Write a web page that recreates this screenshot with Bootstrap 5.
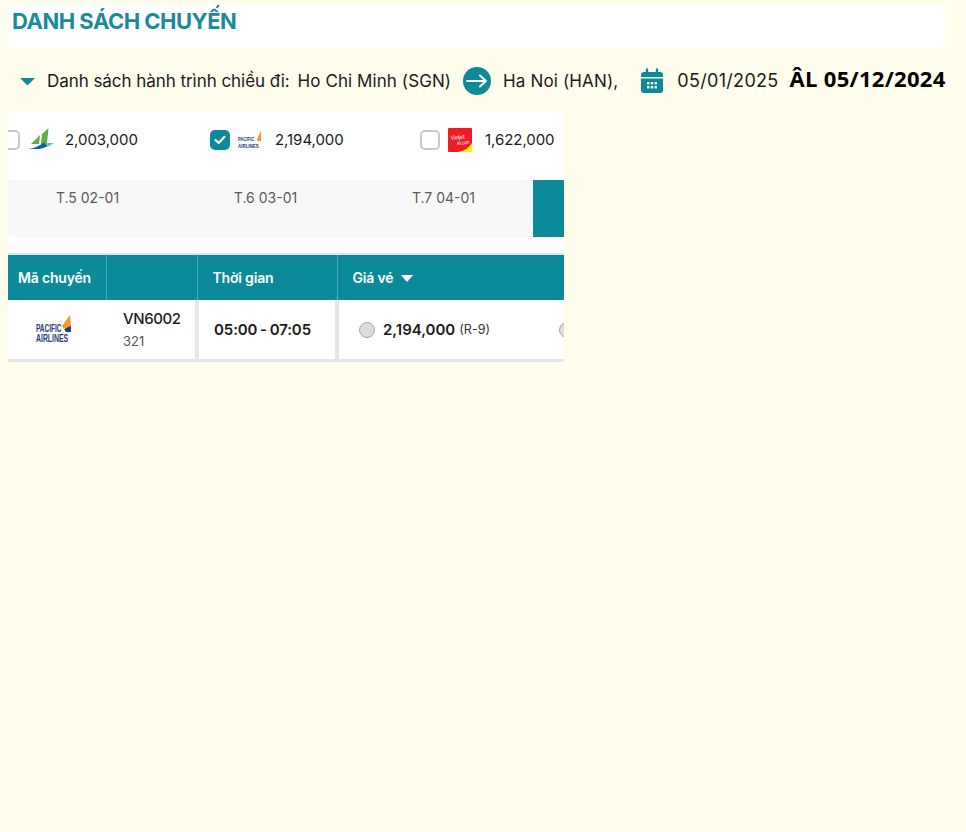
<!DOCTYPE html>
<html lang="vi">

<head>
    <meta charset="UTF-8">
    <title>Danh sách chuyến</title>
    <link href="https://cdn.jsdelivr.net/npm/bootstrap@5.3.3/dist/css/bootstrap.min.css" rel="stylesheet">
    <style>
        body {
            background-color: #FFFDEB;
            font-family: Inter, "Noto Sans", sans-serif;
            color: #1a1a1a;
            padding: 5px 21px 0 8px;
            min-height: 832px;
        }

        .title-bar {
            height: 42px;
            padding: 2px 4px;
            font-size: 22px;
            line-height: 28px;
            font-weight: 700;
            letter-spacing: -0.5px;
            color: #1B8A9A;
        }

        .route-bar {
            height: 66px;
            padding-left: 12px;
            padding-top: 2px;
            font-size: 17px;
            line-height: 24px;
            white-space: nowrap;
        }

        .route-label {
            margin-left: 12px;
            letter-spacing: -0.05px;
        }

        .route-from {
            margin-left: 8px;
            letter-spacing: 0.08px;
        }

        .route-arrow {
            margin-left: 12px;
            flex: none;
        }

        .route-to {
            margin-left: 12px;
            letter-spacing: 0.15px;
        }

        .route-cal {
            margin-left: 22px;
            flex: none;
        }

        .route-date {
            margin-left: 13px;
            font-size: 18px;
            letter-spacing: 0.3px;
        }

        .lunar-date {
            font-family: "Open Sans", sans-serif;
            font-weight: 700;
            font-size: 22px;
            letter-spacing: 0.3px;
            color: #000;
            margin-left: 11px;
            margin-top: -7px;
        }

        .result-box {
            width: 556px;
            height: 250px;
            overflow: hidden;
            background: #fff;
        }

        .airline-row {
            height: 67px;
            padding-bottom: 13px;
            margin-left: -8px;
        }

        .airline-item {
            width: 210px;
            flex: none;
            font-size: 15px;
            letter-spacing: -0.05px;
        }

        .check-box {
            width: 20px;
            height: 20px;
            flex: none;
            border: 2px solid #c9c9c9;
            border-radius: 5px;
            background: #fff;
        }

        .check-box.is-on {
            background: #0D8A99;
            border-color: #0D8A99;
        }

        .air-logo {
            flex: none;
            margin-left: 8px;
            margin-right: 13px;
        }

        .air-logo.logo-bamboo {
            margin-right: 12px;
            margin-bottom: 3px;
        }

        .air-logo.logo-pacific {
            margin-left: 7px;
            margin-right: 12px;
        }

        .day-tabs {
            height: 57px;
            margin-left: -9px;
            width: 800px;
            background: #F8F8F8;
        }

        .day-tab {
            width: 178px;
            flex: none;
            padding-top: 8px;
            padding-right: 1px;
            text-align: center;
            font-size: 14px;
            line-height: 20px;
            color: #5b5b5b;
        }

        .day-tab.is-active {
            background: #0D8A99;
        }

        .flight-table {
            width: 692px;
            margin-top: 16px;
            table-layout: fixed;
            border-collapse: collapse;
            border-top: 2px solid #e4e4e4;
        }

        .col-code {
            width: 98px;
        }

        .col-no {
            width: 91px;
        }

        .col-time {
            width: 140px;
        }

        .flight-table th {
            height: 46px;
            background: #0D8A99;
            color: #fff;
            font-size: 14px;
            font-weight: 600;
            letter-spacing: -0.18px;
            padding: 0 0 0 15px;
            border-left: 1px solid #4fa9b4;
        }

        .flight-table th:first-child {
            padding-left: 10px;
            border-left: 0;
        }

        .flight-table td {
            height: 60px;
            padding: 0;
            vertical-align: middle;
            border-left: 4px solid #e6e6e6;
            border-bottom: 3px solid #e6e6e6;
        }

        .flight-table td.no-line {
            border-left: 0;
        }

        .flight-table td.flight-no {
            font-size: 15px;
            line-height: 20px;
            font-weight: 500;
            letter-spacing: -0.4px;
            padding-left: 17px;
            padding-top: 3px;
        }

        .flight-type {
            font-size: 13px;
            line-height: 24px;
            font-weight: 400;
            letter-spacing: 0;
            color: #555;
        }

        .flight-table td.flight-time {
            font-size: 15px;
            font-weight: 600;
            letter-spacing: -0.1px;
            word-spacing: -1px;
            padding-left: 15px;
            padding-top: 2px;
        }

        .price-item {
            width: 200px;
            flex: none;
            padding-left: 20px;
            padding-top: 2px;
        }

        .radio-dot {
            width: 16px;
            height: 16px;
            flex: none;
            border: 1px solid #a9a9a9;
            border-radius: 50%;
            background: #dcdcdc;
            margin-right: 8px;
        }

        .price-val {
            font-size: 15px;
            font-weight: 600;
        }

        .price-class {
            font-size: 12.5px;
            margin-left: 4px;
            color: #333;
        }

        .sort-caret {
            margin-left: 4px;
            margin-bottom: 2px;
        }

        .logo-big {
            display: block;
            margin-left: 27px;
            margin-bottom: 1px;
        }

        .table-end {
            height: 1px;
            margin-top: 1px;
            background: #e6e6e6;
        }

        .logo-text {
            font-family: "Liberation Sans", sans-serif;
            font-weight: 700;
            fill: #2b3a75;
        }
    </style>
</head>

<body>
    <div class="title-bar bg-white">DANH SÁCH CHUYẾN</div>

    <div class="route-bar d-flex align-items-center">
        <svg width="15" height="7" viewBox="0 0 15 7" class="flex-shrink-0">
            <path d="M0 0H15L8.5 6.5Q7.5 7.3 6.5 6.5Z" fill="#0D8A99" />
        </svg>
        <span class="route-label">Danh sách hành trình chiều đi:</span>
        <span class="route-from">Ho Chi Minh (SGN)</span>
        <svg width="28" height="28" viewBox="0 0 28 28" class="route-arrow">
            <circle cx="14" cy="14" r="14" fill="#0D8A99" />
            <path d="M4 14H23M17 8.5L23 14L17 19.5" fill="none" stroke="#fff" stroke-width="2" stroke-linecap="round" stroke-linejoin="round" />
        </svg>
        <span class="route-to">Ha Noi (HAN),</span>
        <svg width="24" height="26" viewBox="0 0 24 26" class="route-cal">
            <path d="M7 1.5V6M17 1.5V6" stroke="#0D8A99" stroke-width="2.4" stroke-linecap="round" />
            <path d="M1 9V7Q1 4 4 4H20Q23 4 23 7V9Z" fill="#0D8A99" />
            <path d="M1 10.5H23V22Q23 25 20 25H4Q1 25 1 22Z" fill="#0D8A99" />
            <g fill="#fff">
                <rect x="7" y="14" width="2.4" height="2.4" />
                <rect x="10.8" y="14" width="2.4" height="2.4" />
                <rect x="14.6" y="14" width="2.4" height="2.4" />
                <rect x="7" y="18" width="2.4" height="2.4" />
                <rect x="10.8" y="18" width="2.4" height="2.4" />
                <rect x="14.6" y="18" width="2.4" height="2.4" />
            </g>
        </svg>
        <span class="route-date">05/01/2025</span>
        <span class="lunar-date">ÂL 05/12/2024</span>
    </div>

    <div class="result-box">
        <div class="airline-row d-flex">
            <div class="airline-item d-flex align-items-center">
                <span class="check-box"></span>
                <svg width="25" height="22" viewBox="0 0 25 22" class="air-logo logo-bamboo">
                    <path d="M3 16L12 7L11 16ZM13 16L14 6L20.5 0L19 15Z" fill="#5fae45" />
                    <path d="M0 21Q9 20 15 15H25Q20 19 11 21Z" fill="#0b5fa5" />
                    <path d="M17 15H25Q24 17 19 18Z" fill="#4fc3ec" />
                </svg>
                <span>2,003,000</span>
            </div>
            <div class="airline-item d-flex align-items-center">
                <span class="check-box is-on d-flex align-items-center justify-content-center">
                    <svg width="12" height="10" viewBox="0 0 12 10">
                        <path d="M1.5 5L4.7 8L10.5 1.8" fill="none" stroke="#fff" stroke-width="2" stroke-linecap="round" stroke-linejoin="round" />
                    </svg>
                </span>
                <svg width="26" height="20" viewBox="0 0 26 20" class="air-logo logo-pacific">
                    <text transform="translate(1 11) scale(.7 1)" class="logo-text" font-size="6">PACIFIC</text>
                    <text transform="translate(1 18) scale(.75 1)" class="logo-text" font-size="6">AIRLINES</text>
                    <path d="M20 9L24 1V11H20Z" fill="#f09a2c" />
                </svg>
                <span>2,194,000</span>
            </div>
            <div class="airline-item d-flex align-items-center">
                <span class="check-box"></span>
                <svg width="24" height="24" viewBox="0 0 24 24" class="air-logo">
                    <rect width="24" height="24" rx="1" fill="#ee1c25" />
                    <path d="M10 24Q20 22 24 15V24Z" fill="#fff200" />
                    <text transform="translate(3 12) rotate(-6) scale(.84 1)" font-size="6" fill="#fff" font-family="Liberation Sans">Vietjet</text>
                    <text transform="translate(9 17) rotate(-6) scale(.76 1)" font-size="5" fill="#fff" font-family="Liberation Sans">Air.com</text>
                </svg>
                <span>1,622,000</span>
            </div>
        </div>

        <div class="day-tabs d-flex">
            <div class="day-tab">T.5 02-01</div>
            <div class="day-tab">T.6 03-01</div>
            <div class="day-tab">T.7 04-01</div>
            <div class="day-tab is-active"></div>
        </div>

        <table class="flight-table">
            <colgroup>
                <col class="col-code">
                <col class="col-no">
                <col class="col-time">
                <col>
            </colgroup>
            <thead>
                <tr>
                    <th>Mã chuyến</th>
                    <th></th>
                    <th>Thời gian</th>
                    <th>
                        Giá vé
                        <svg width="12" height="7" viewBox="0 0 12 7" class="sort-caret">
                            <path d="M0 0H12L6.8 6.2Q6 7 5.2 6.2Z" fill="#fff" />
                        </svg>
                    </th>
                </tr>
            </thead>
            <tbody>
                <tr>
                    <td class="no-line">
                        <svg width="38" height="28" viewBox="0 0 38 28" class="logo-big">
                            <text transform="translate(1 17) scale(.65 1)" class="logo-text" font-size="10">PACIFIC</text>
                            <text transform="translate(1 27) scale(.69 1)" class="logo-text" font-size="10">AIRLINES</text>
                            <path d="M27 11L35 0L36 13H28Z" fill="#f09a2c" />
                            <path d="M29 14L36 11V17H31Z" fill="#2b3a75" />
                        </svg>
                    </td>
                    <td class="no-line flight-no">VN6002<div class="flight-type">321</div></td>
                    <td class="flight-time">05:00 - 07:05</td>
                    <td>
                        <div class="d-flex">
                            <div class="price-item d-flex align-items-center">
                                <span class="radio-dot"></span>
                                <span class="price-val">2,194,000</span>
                                <span class="price-class">(R-9)</span>
                            </div>
                            <div class="price-item d-flex align-items-center">
                                <span class="radio-dot"></span>
                            </div>
                        </div>
                    </td>
                </tr>
            </tbody>
        </table>
        <div class="table-end"></div>
    </div>

    <script src="https://cdn.jsdelivr.net/npm/bootstrap@5.3.3/dist/js/bootstrap.bundle.min.js"></script>
</body>

</html>
